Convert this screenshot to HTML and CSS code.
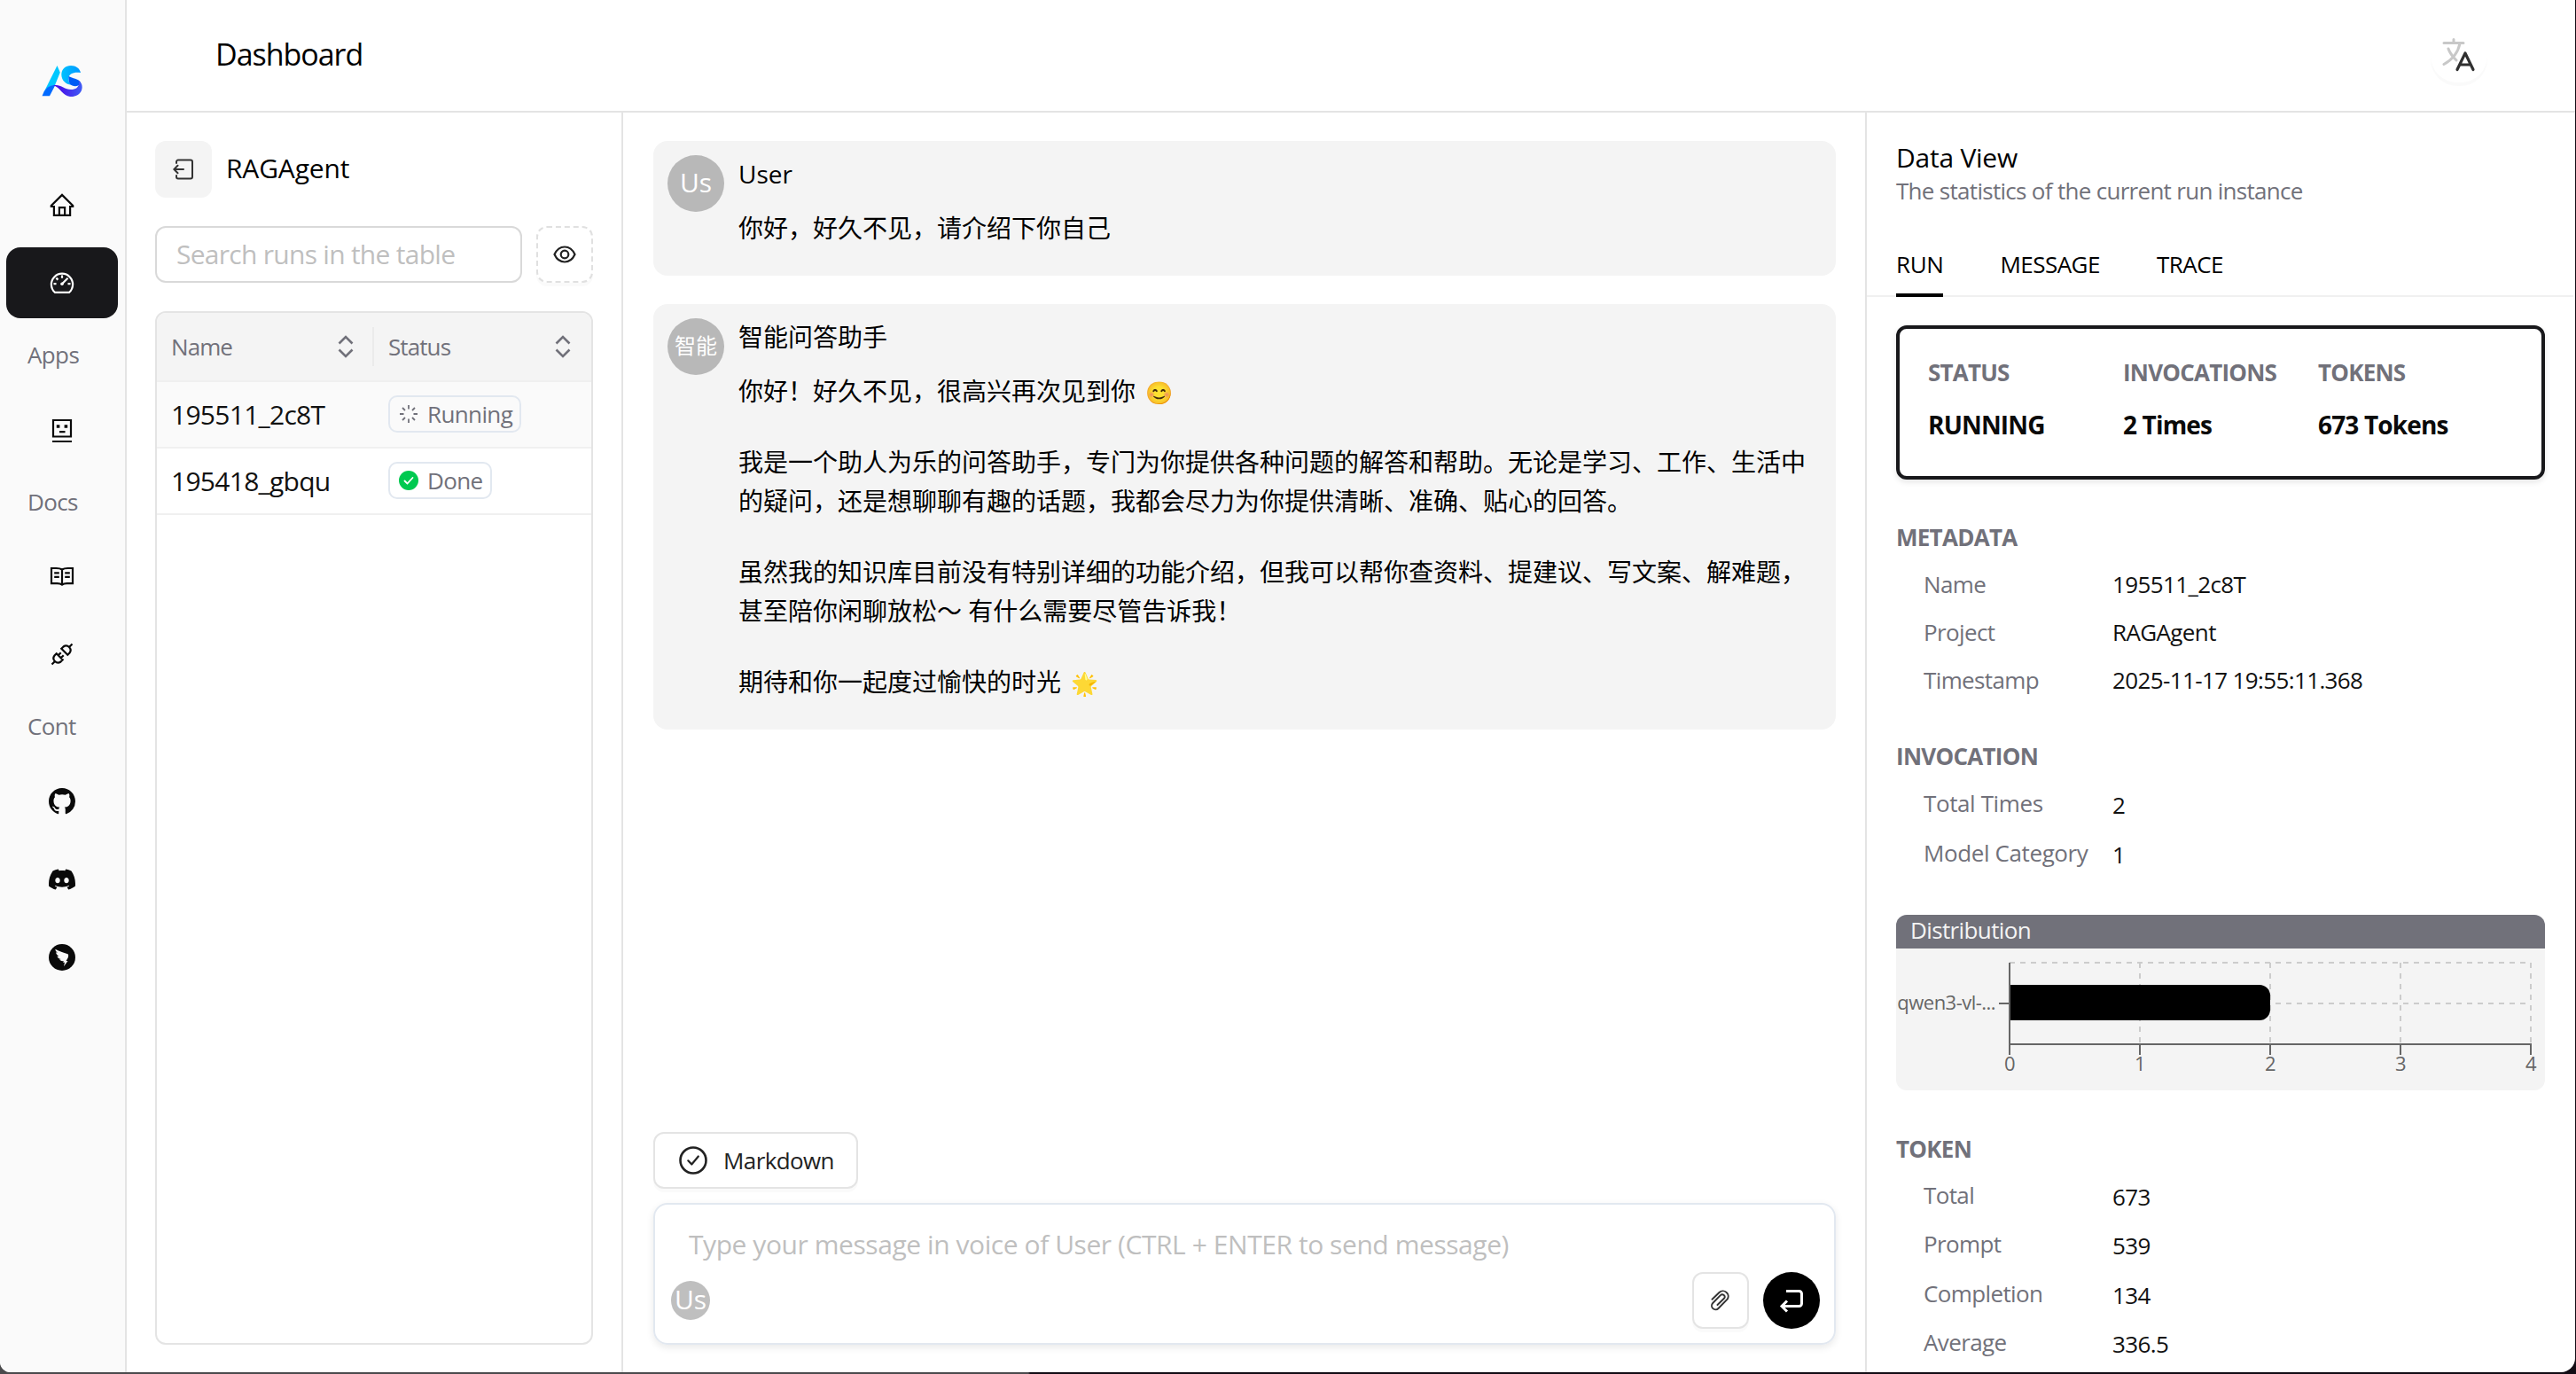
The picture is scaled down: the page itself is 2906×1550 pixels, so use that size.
FILE: index.html
```
<!DOCTYPE html>
<html lang="en">
<head>
    <meta charset="UTF-8">
    <meta name="viewport" content="width=device-width, initial-scale=1.0">
    <title>Dashboard - RAGAgent</title>
    <link rel="stylesheet" href="styles.css">
</head>
<body>

    <div class="app">
        <!-- Sidebar -->
        <nav class="sidebar">
            <div class="logo">
                <svg width="46" height="36" viewBox="0 0 46 36">
                    <defs>
                        <linearGradient id="wave" x1="0" y1="0" x2="1" y2="0">
                            <stop offset="0" stop-color="#4a00e6"/>
                            <stop offset="1" stop-color="#3f5cf5"/>
                        </linearGradient>
                        <linearGradient id="arc" x1="0" y1="0" x2="1" y2="0">
                            <stop offset="0" stop-color="#00c2ff"/>
                            <stop offset="1" stop-color="#0096ff"/>
                        </linearGradient>
                    </defs>
                    <path fill="#00c8ff" d="M17.500 0 20.800 7.800 15 22C9.500 22 5 25.500 2 31z"/>
                    <path fill="#006aff" d="M.5 34.200 2.600 29.500C5.500 24.500 10 22 15.500 21.800L9 34.200z"/>
                    <path fill="url(#arc)" d="M44 8C40 7.500 36 7.500 33 9.500 30.500 11.200 29.800 13.500 30.500 17.500 31 19.500 33 20.800 35 21.800 28 22 22.500 17 22.300 10.500 22.200 4 27 0 33 0 38.500 0 43 3 44 8z"/>
                    <path fill="#005cf5" d="M30.300 12C35 14.500 41 14.500 44 19 43 23 38 24 34.500 22.500 31.500 21 30.200 19 30.300 12z"/>
                    <path fill="url(#wave)" d="M13.500 22.200C21 20.500 25.500 27 33 27 39.500 27 43.500 23 41.500 16.500 45.500 19.500 46.500 23.500 45 28 43 33 37.500 35.500 32 35 24 34 20.500 24.500 13.500 22.200z"/>
                </svg>
            </div>

            <a class="nav-item">
                <svg class="icon" viewBox="0 0 30 30"><path d="M15 3.900 2.800 16v1h3.100v9.800h18.200V17h3.100v-1zM11.900 26.800v-8.600h6.200v8.600"/></svg>
            </a>
            <a class="nav-item active">
                <svg class="icon" viewBox="0 0 30 30"><path d="M6.900 25.800A12.100 12.100 0 1 1 23.100 25.800zM15 6.500v3.200M5.500 16.200h3M21.500 16.200h3M8.400 9.600l2 2M15 16.200l6.500-6.500"/><circle cx="15" cy="16.200" r="1.800" fill="currentColor" stroke="none"/></svg>
            </a>

            <div class="nav-label">Apps</div>
            <a class="nav-item">
                <svg class="icon" viewBox="0 0 30 30"><path d="M5 4h20v18.500H5zM4 28h22M12 17.200h6.500"/><path class="solid" d="M8.800 9.200h3.600v3.600H8.800zM17.600 9.200h3.600v3.600h-3.600z"/></svg>
            </a>

            <div class="nav-label">Docs</div>
            <a class="nav-item">
                <svg class="icon" viewBox="0 0 30 30"><path d="M15 7.500C13 6.200 11 6 8.500 6H3v17.200h6.500c2.500 0 4 .4 5.500 1.500 1.500-1.100 3-1.500 5.500-1.500H27V6h-5.500C19 6 17 6.200 15 7.500zM15 7.500v17M6.200 11.300h5.600M6.200 15.800h5.600M18.200 11.300h5.600M18.200 15.800h5.600"/></svg>
            </a>
            <a class="nav-item">
                <svg class="icon" viewBox="0 0 30 30"><path d="M3.500 26.500l3-3M26.500 3.500l-3 3M14.300 8.700l7 7 2.200-2.200a5 5 0 0 0-7-7zM8.700 14.300l7 7-2.200 2.200a5 5 0 0 1-7-7zM10.700 16.300l3-3M13.700 19.300l3-3"/></svg>
            </a>

            <div class="nav-label">Cont</div>
            <a class="nav-item">
                <svg class="brand" viewBox="0 0 16 16"><path d="M8 0C3.580 0 0 3.580 0 8c0 3.540 2.290 6.530 5.470 7.590.4.070.55-.17.55-.38 0-.19-.01-.82-.01-1.490-2.010.37-2.530-.49-2.690-.94-.09-.23-.48-.94-.82-1.130-.28-.15-.68-.52-.01-.53.63-.01 1.080.58 1.230.82.72 1.210 1.870.87 2.330.66.07-.52.28-.87.51-1.070-1.780-.2-3.640-.89-3.640-3.950 0-.87.31-1.590.82-2.150-.08-.2-.36-1.020.08-2.120 0 0 .67-.21 2.200.82.64-.18 1.320-.27 2-.27s1.360.09 2 .27c1.530-1.040 2.200-.82 2.200-.82.44 1.100.16 1.920.08 2.120.51.56.82 1.270.82 2.150 0 3.070-1.870 3.750-3.650 3.950.29.25.54.73.54 1.480 0 1.070-.01 1.930-.01 2.200 0 .21.15.46.55.38A8.010 8.010 0 0 0 16 8c0-4.420-3.580-8-8-8z"/></svg>
            </a>
            <a class="nav-item">
                <svg class="brand" viewBox="0 0 24 24"><path d="M20.317 4.3698a19.7913 19.7913 0 00-4.8851-1.5152.0741.0741 0 00-.0785.0371c-.211.3753-.4447.8648-.6083 1.2495-1.8447-.2762-3.68-.2762-5.4868 0-.1636-.3933-.4058-.8742-.6177-1.2495a.077.077 0 00-.0785-.037 19.7363 19.7363 0 00-4.8852 1.515.0699.0699 0 00-.0321.0277C.5334 9.0458-.319 13.5799.0992 18.0578a.0824.0824 0 00.0312.0561c2.0528 1.5076 4.0413 2.4228 5.9929 3.0294a.0777.0777 0 00.0842-.0276c.4616-.6304.8731-1.2952 1.226-1.9942a.076.076 0 00-.0416-.1057c-.6528-.2476-1.2743-.5495-1.8722-.8923a.077.077 0 01-.0076-.1277c.1258-.0943.2517-.1923.3718-.2914a.0743.0743 0 01.0776-.0105c3.9278 1.7933 8.18 1.7933 12.0614 0a.0739.0739 0 01.0785.0095c.1202.099.246.1981.3728.2924a.077.077 0 01-.0066.1276 12.2986 12.2986 0 01-1.873.8914.0766.0766 0 00-.0407.1067c.3604.698.7719 1.3628 1.225 1.9932a.076.076 0 00.0842.0286c1.961-.6067 3.9495-1.5219 6.0023-3.0294a.077.077 0 00.0313-.0552c.5004-5.177-.8382-9.6739-3.5485-13.6604a.061.061 0 00-.0312-.0286zM8.02 15.3312c-1.1825 0-2.1569-1.0857-2.1569-2.419 0-1.3332.9555-2.4189 2.157-2.4189 1.2108 0 2.1757 1.0952 2.1568 2.419 0 1.3332-.9555 2.4189-2.1569 2.4189zm7.9748 0c-1.1825 0-2.1569-1.0857-2.1569-2.419 0-1.3332.9554-2.4189 2.1569-2.4189 1.2108 0 2.1757 1.0952 2.1568 2.419 0 1.3332-.946 2.4189-2.1568 2.4189Z"/></svg>
            </a>
            <a class="nav-item">
                <svg class="brand" viewBox="0 0 30 30"><circle cx="15" cy="15" r="15"/><path fill="#fafafa" d="M7.300 5.700C12 8.300 18 10 21.500 11.300 22.500 12 22.300 14 21.500 15.800L19.600 19h1.900L17 25.200l1-4.500h-1.800l.5-1.700C14.500 19.500 12.800 18.500 12 17.500l2-.4C12 16.800 10 15.500 9.400 13.800l2 .1C9.500 12.700 8.300 11 8 9.300l2 .7C8.500 8.800 7.500 7.500 7.300 5.700z"/></svg>
            </a>
        </nav>

        <div class="main">
            <header class="header">
                <h1>Dashboard</h1>
                <button class="lang-btn">
                    <svg width="38" height="38" viewBox="0 0 38 38" fill="none" stroke-linecap="round" stroke-linejoin="round">
                        <path stroke="#c8c8c8" stroke-width="3" d="M2 5.500h22M13 1.500v4M7 12c2 6 6 10 9 13M20 6C18 16 12 24 2 29.500"/>
                        <path stroke="#303030" stroke-width="3.200" d="M17 35.500 26 17l9 18.500M20 30h12"/>
                    </svg>
                </button>
            </header>

            <div class="content">
                <!-- Run list -->
                <section class="runs">
                    <div class="runs-title">
                        <button class="back-btn">
                            <svg width="24" height="24" viewBox="0 0 24 24" fill="none" stroke="#333" stroke-width="2" stroke-linecap="round"><path d="M4 5V3.500A2 2 0 0 1 6 1.500H20a2 2 0 0 1 2 2v17a2 2 0 0 1-2 2H6a2 2 0 0 1-2-2V19M12 12H1.500M5.500 7.800 1.300 12l4.200 4.200"/></svg>
                        </button>
                        <h2>RAGAgent</h2>
                    </div>
                    <div class="search-row">
                        <input type="text" class="search" placeholder="Search runs in the table">
                        <button class="eye-btn">
                            <svg width="26" height="20" viewBox="0 0 26 20" fill="none" stroke="#222" stroke-width="2.200"><path d="M1.500 10C4 4.500 8 1.500 13 1.500S22 4.500 24.500 10C22 15.500 18 18.500 13 18.500S4 15.500 1.500 10z"/><circle cx="13" cy="10" r="4.300"/></svg>
                        </button>
                    </div>
                    <div class="table">
                        <div class="tr th">
                            <div class="td">Name
                                <svg class="sorter" viewBox="0 0 18 26"><path d="M1.500 9.500 9 2l7.500 7.500M1.500 16.500 9 24l7.500-7.500"/></svg>
                            </div>
                            <div class="td">Status
                                <svg class="sorter" viewBox="0 0 18 26"><path d="M1.500 9.500 9 2l7.500 7.500M1.500 16.500 9 24l7.500-7.500"/></svg>
                            </div>
                        </div>
                        <div class="tr selected">
                            <div class="td">195511_2c8T</div>
                            <div class="td">
                                <span class="tag">
                                    <svg viewBox="0 0 22 22" fill="none" stroke="#71717a" stroke-width="1.800"><path d="M11 1v4.500M11 16.500V21M1 11h4.500M16.500 11H21M4 4l3 3M15 15l3 3M4 18l3-3M15 7l3-3"/></svg>
                                    Running
                                </span>
                            </div>
                        </div>
                        <div class="tr">
                            <div class="td">195418_gbqu</div>
                            <div class="td">
                                <span class="tag">
                                    <svg viewBox="0 0 22 22" fill="none"><circle cx="11" cy="11" r="11" fill="#00c950"/><path stroke="#fff" stroke-width="1.800" stroke-linecap="round" d="M6.500 11.500l3 3 6-6.500"/></svg>
                                    Done
                                </span>
                            </div>
                        </div>
                    </div>
                </section>

                <!-- Chat -->
                <section class="chat">
                    <div class="messages">
                        <div class="message">
                            <div class="avatar">Us</div>
                            <div class="message-body">
                                <div class="sender">User</div>
                                <p>你好，好久不见，请介绍下你自己</p>
                            </div>
                        </div>
                        <div class="message">
                            <div class="avatar avatar-cjk">智能</div>
                            <div class="message-body">
                                <div class="sender">智能问答助手</div>
                                <p>你好！好久不见，很高兴再次见到你 <span class="emoji">😊</span></p>
                                <p>我是一个助人为乐的问答助手，专门为你提供各种问题的解答和帮助。无论是学习、工作、生活中的疑问，还是想聊聊有趣的话题，我都会尽力为你提供清晰、准确、贴心的回答。</p>
                                <p>虽然我的知识库目前没有特别详细的功能介绍，但我可以帮你查资料、提建议、写文案、解难题，甚至陪你闲聊放松～ 有什么需要尽管告诉我！</p>
                                <p>期待和你一起度过愉快的时光 <span class="emoji">🌟</span></p>
                            </div>
                        </div>
                    </div>

                    <button class="markdown-btn">
                        <svg width="32" height="32" viewBox="0 0 32 32" fill="none" stroke="#222" stroke-linecap="round" stroke-linejoin="round"><circle cx="16" cy="16" r="14.500" stroke-width="2.600"/><path stroke-width="2.200" d="M10.300 16.300l4 4.200 7.500-9"/></svg>
                        Markdown
                    </button>

                    <div class="composer">
                        <div class="placeholder">Type your message in voice of User (CTRL + ENTER to send message)</div>
                        <div class="composer-bar">
                            <div class="avatar avatar-small">Us</div>
                            <button class="attach-btn">
                                <svg width="22" height="24" viewBox="0 0 22 24" fill="none" stroke="#333" stroke-width="1.900" stroke-linecap="round"><path d="M1.500 10.800 9.500 3a6 6 0 0 1 9.300 7.400L8.500 21a4.300 4.300 0 0 1-6.300-6l8.700-8.800a2.600 2.600 0 0 1 4 3.600L7.500 17"/></svg>
                            </button>
                            <button class="send-btn">
                                <svg width="28" height="28" viewBox="0 0 28 28" fill="none" stroke="#fff" stroke-width="3"><path d="M8 3.500h14.500a3 3 0 0 1 3 3v11a3 3 0 0 1-3 3H3M9 14.500 3 20.500l6 6"/></svg>
                            </button>
                        </div>
                    </div>
                </section>

                <!-- Data view -->
                <section class="data-view">
                    <h2>Data View</h2>
                    <p class="subtitle">The statistics of the current run instance</p>

                    <div class="tabs">
                        <div class="tab tab-active">RUN</div>
                        <div class="tab">MESSAGE</div>
                        <div class="tab">TRACE</div>
                    </div>

                    <div class="data-body">
                        <div class="stats">
                            <div><div class="stat-label">STATUS</div><div class="stat-value">RUNNING</div></div>
                            <div><div class="stat-label">INVOCATIONS</div><div class="stat-value">2 Times</div></div>
                            <div><div class="stat-label">TOKENS</div><div class="stat-value">673 Tokens</div></div>
                        </div>

                        <div class="group metadata">
                            <h3>METADATA</h3>
                            <dl>
                                <dt>Name</dt><dd>195511_2c8T</dd>
                                <dt>Project</dt><dd>RAGAgent</dd>
                                <dt>Timestamp</dt><dd>2025-11-17 19:55:11.368</dd>
                            </dl>
                        </div>

                        <div class="group invocation">
                            <h3>INVOCATION</h3>
                            <dl>
                                <dt>Total Times</dt><dd>2</dd>
                                <dt>Model Category</dt><dd>1</dd>
                            </dl>
                        </div>

                        <div class="distribution">
                            <div class="distribution-title">Distribution</div>
                            <svg width="732" height="160" viewBox="0 0 732 160">
                                <g stroke="#ccc" stroke-width="2" stroke-dasharray="6 6" fill="none">
                                    <path d="M128 16H716M128 62H716M275 16V108M422 16V108M569 16V108M716 16V108"/>
                                </g>
                                <path d="M128 41H410a12 12 0 0 1 12 12V69a12 12 0 0 1-12 12H128z"/>
                                <path stroke="#666" stroke-width="2" fill="none" d="M128 16V120M116 62H128M127 108H717M275 108V120M422 108V120M569 108V120M716 108V120"/>
                                <g class="axis-text">
                                    <text x="112" y="69" text-anchor="end">qwen3-vl-...</text>
                                    <text x="128" y="138" text-anchor="middle">0</text>
                                    <text x="275" y="138" text-anchor="middle">1</text>
                                    <text x="422" y="138" text-anchor="middle">2</text>
                                    <text x="569" y="138" text-anchor="middle">3</text>
                                    <text x="716" y="138" text-anchor="middle">4</text>
                                </g>
                            </svg>
                        </div>

                        <div class="group token">
                            <h3>TOKEN</h3>
                            <dl>
                                <dt>Total</dt><dd>673</dd>
                                <dt>Prompt</dt><dd>539</dd>
                                <dt>Completion</dt><dd>134</dd>
                                <dt>Average</dt><dd>336.5</dd>
                            </dl>
                        </div>
                    </div>
                </section>
            </div>
        </div>
    </div>

</body>
</html>
```
FILE: styles.css
```
* {
    box-sizing: border-box;
    letter-spacing: -0.024em;
}

body {
    margin: 0;
    height: 1550px;
    overflow: hidden;
    background: linear-gradient(90deg, #4a4a4c 1160px, #120c14 1162px);
    font-family: "Open Sans", "Noto Sans CJK SC", sans-serif;
    font-size: 26px;
    color: #000;
}

h1, h2, h3, p, dl, dd {
    margin: 0;
    font-weight: 400;
}

button {
    display: flex;
    align-items: center;
    justify-content: center;
    padding: 0;
    border: none;
    background: #fff;
    font-family: inherit;
}

.app {
    display: flex;
    width: 2905px;
    height: 1548px;
    background: #fff;
    border-radius: 0 0 16px 12px;
    overflow: hidden;
}

/* Sidebar */
.sidebar {
    width: 143px;
    flex: none;
    background: #fafafa;
    border-right: 2px solid #e4e4e4;
}

.logo {
    height: 191px;
    padding: 74px 0 0 47px;
}

.nav-item {
    display: flex;
    align-items: center;
    justify-content: center;
    width: 126px;
    height: 80px;
    margin: 0 0 8px 7px;
    border-radius: 16px;
    color: #0a0a0a;
}

.nav-item.active {
    background: #18181b;
    color: #fff;
}

.nav-label {
    height: 69.5px;
    margin-bottom: 8px;
    padding-left: 31px;
    line-height: 67px;
    color: #71717a;
}

.icon {
    width: 30px;
    height: 30px;
    fill: none;
    stroke: currentColor;
    stroke-width: 2.2;
}

.icon .solid {
    fill: currentColor;
    stroke: none;
}

.brand {
    width: 30px;
    height: 30px;
    fill: #0a0a0a;
}

/* Header */
.main {
    flex: 1;
    display: flex;
    flex-direction: column;
    min-width: 0;
}

.header {
    display: flex;
    justify-content: space-between;
    height: 127px;
    padding: 33px 99px 0 100px;
    border-bottom: 2px solid #e4e4e4;
}

.header h1 {
    font-size: 34px;
    line-height: 57px;
    letter-spacing: -0.03em;
}

.lang-btn {
    width: 64px;
    height: 60px;
    padding-bottom: 2px;
    border-radius: 32px;
    box-shadow: 0 4px 0 rgba(0, 0, 0, 0.02);
}

.content {
    flex: 1;
    display: flex;
    min-height: 0;
}

/* Run list */
.runs {
    display: flex;
    flex-direction: column;
    gap: 32px;
    width: 560px;
    padding: 32px 32px 31px;
    border-right: 2px solid #e4e4e4;
}

.runs-title {
    display: flex;
    align-items: center;
    gap: 16px;
}

.runs-title h2 {
    padding-bottom: 3px;
    font-size: 30px;
    letter-spacing: -0.005em;
}

.back-btn {
    width: 64px;
    height: 64px;
    border-radius: 12px;
    background: #f4f4f4;
}

.search-row {
    display: flex;
    gap: 16px;
}

.search {
    width: 414px;
    height: 64px;
    padding: 0 22px 2px;
    border: 2px solid #d9d9d9;
    border-radius: 12px;
    font-family: inherit;
    font-size: 30px;
}

.search::placeholder {
    color: #bfbfbf;
}

.eye-btn {
    width: 64px;
    height: 64px;
    border: 2px dashed #e0e0e0;
    border-radius: 12px;
    box-shadow: 0 4px 0 rgba(0, 0, 0, 0.02);
}

.table {
    flex: 1;
    border: 2px solid #e4e4e4;
    border-radius: 12px;
    overflow: hidden;
}

.tr {
    display: flex;
    height: 75px;
    border-bottom: 2px solid #f0f0f0;
}

.td {
    display: flex;
    align-items: center;
    flex: 1;
    padding: 0 0 1px 16px;
    font-size: 30px;
    color: #111;
}

.th {
    height: 78px;
    background: #f4f4f4;
}

.th .td {
    justify-content: space-between;
    padding: 0 23px 0 16px;
    font-size: 26px;
    letter-spacing: -0.035em;
    color: #71717a;
}

.th .td:first-child {
    margin: 16px 0;
    border-right: 2px solid #ebebeb;
    padding-right: 21px;
}

.tr .td:first-child {
    flex: 0 0 245px;
}

.selected {
    background: #fafafa;
}

.sorter {
    width: 18px;
    height: 26px;
    fill: none;
    stroke: #71717a;
    stroke-width: 2.6;
}

.tag {
    display: flex;
    align-items: center;
    gap: 10px;
    height: 42px;
    padding: 0 8px 0 10px;
    border: 2px solid #e2e8f0;
    border-radius: 10px;
    font-size: 26px;
    color: #71717a;
}

.tag svg {
    width: 22px;
    height: 22px;
}

/* Chat */
.chat {
    display: flex;
    flex-direction: column;
    width: 1403px;
    padding: 32px 33px 31px 34px;
    border-right: 2px solid #e4e4e4;
}

.messages {
    flex: 1;
    display: flex;
    flex-direction: column;
    gap: 32px;
}

.message {
    display: flex;
    gap: 16px;
    padding: 16px 16px 31px;
    background: #f4f4f4;
    border-radius: 16px;
    font-size: 28px;
    line-height: 44px;
}

.message-body {
    flex: 1;
    margin: -1px 0 1px;
}

.message-body * {
    letter-spacing: 0;
}

.message p {
    margin-top: 36px;
}

.message .sender + p {
    margin-top: 17px;
}

.emoji {
    margin-left: 4px;
    font-size: 25px;
    line-height: 30px;
}

.avatar {
    flex: none;
    width: 64px;
    height: 64px;
    border-radius: 50%;
    background: #b8b8b8;
    color: #fff;
    font-size: 30px;
    line-height: 62px;
    letter-spacing: 0;
    text-align: center;
}

.avatar-cjk {
    font-size: 24px;
}

.avatar-small {
    width: 44px;
    height: 44px;
    margin: 0 auto 0 0;
    background: #bfbfbf;
    font-size: 30px;
    line-height: 42px;
}

.markdown-btn {
    gap: 18px;
    width: 231px;
    height: 64px;
    margin-bottom: 16px;
    padding: 0 0 1px 2px;
    border: 2px solid #e4e4e4;
    border-radius: 12px;
    box-shadow: 0 4px 0 rgba(0, 0, 0, 0.02);
    font-size: 26px;
    color: #222;
}

.composer {
    height: 160px;
    padding: 23px 16px 16px 18px;
    border: 2px solid #e2e8f0;
    border-radius: 16px;
    box-shadow: 0 3px 8px rgba(0, 0, 0, 0.09);
}

.placeholder {
    padding-left: 20px;
    font-size: 30px;
    line-height: 44px;
    letter-spacing: -0.0145em;
    color: #bfbfbf;
}

.composer-bar {
    display: flex;
    align-items: center;
    gap: 16px;
    margin-top: 9px;
}

.attach-btn, .send-btn {
    width: 64px;
    height: 64px;
    border: 2px solid #e4e4e4;
    border-radius: 12px;
    box-shadow: 0 4px 0 rgba(0, 0, 0, 0.02);
}

.send-btn {
    border: none;
    border-radius: 50%;
    background: #000;
    box-shadow: none;
}

/* Data view */
.data-view {
    flex: 1;
    padding-top: 30px;
    overflow: hidden;
}

.data-view h2 {
    padding-left: 33px;
    font-size: 30px;
    line-height: 42px;
    letter-spacing: -0.008em;
}

.subtitle {
    padding-left: 33px;
    line-height: 33px;
    letter-spacing: -0.027em;
    color: #71717a;
}

.tabs {
    display: flex;
    gap: 64px;
    height: 73px;
    margin: 30px 2px 0 0;
    padding-left: 33px;
    border-bottom: 2px solid #f0f0f0;
}

.tab {
    height: 73px;
    padding-top: 3px;
    line-height: 67px;
    letter-spacing: -0.02em;
}

.tab-active {
    height: 73px;
    border-bottom: 4px solid #000;
    letter-spacing: -0.015em;
}

.data-body {
    padding: 32px 34px 0 33px;
}

.stats {
    display: grid;
    grid-template-columns: 220px 220px 1fr;
    height: 174px;
    padding: 31px 32px 0;
    border: 4px solid #18181b;
    border-radius: 12px;
    box-shadow: 0 3px 6px rgba(0, 0, 0, 0.1);
}

.stat-label, .stat-value {
    line-height: 36px;
    font-weight: 700;
    letter-spacing: -0.03em;
    color: #71717a;
}

.stat-value {
    margin-top: 21px;
    font-size: 28px;
    line-height: 40px;
    color: #0a0a0a;
}

.group {
    margin-top: 47px;
}

.group h3 {
    font-size: 26px;
    line-height: 36px;
    font-weight: 700;
    letter-spacing: -0.028em;
    color: #71717a;
}

.group dl {
    display: grid;
    grid-template-columns: 213px 1fr;
    padding: 8px 0 0 31px;
    line-height: 54px;
}

.group dt {
    color: #71717a;
}

.group dd {
    color: #111;
}

.invocation {
    margin-top: 41px;
}

.invocation dl {
    padding-top: 7px;
    line-height: 56px;
}

.invocation dt {
    letter-spacing: -0.015em;
}

.invocation dd, .token dd {
    padding-top: 2px;
    margin-bottom: -2px;
}

.distribution {
    height: 198px;
    margin-top: 42px;
    border-radius: 12px;
    background: #f4f4f4;
    overflow: hidden;
}

.distribution-title {
    height: 38px;
    padding-left: 16px;
    line-height: 35px;
    background: #71717a;
    color: #f4f4f4;
}

.distribution svg {
    display: block;
}

.axis-text {
    font-size: 22px;
    fill: #666;
}

.token {
    margin-top: 48px;
}

.token dl {
    padding-top: 7px;
    line-height: 55.4px;
}
```
